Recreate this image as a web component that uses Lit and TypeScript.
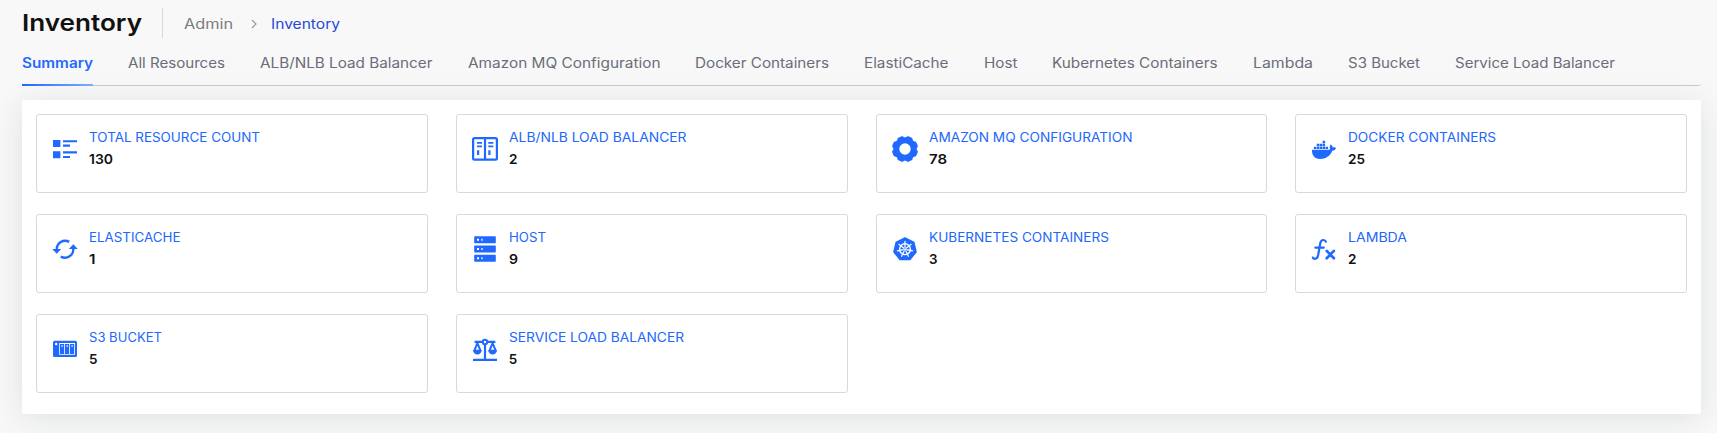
import { LitElement, html, css, svg } from "lit";
import { customElement, property } from "lit/decorators.js";

/** One line of text whose glyphs are stretched to a given advance width. */
@customElement("fit-text")
class FitText extends LitElement {
  @property() text = "";
  @property({ type: Number }) width = 0;

  static styles = css`
    :host { display: inline-block; white-space: pre; }
    .run { display: inline-block; transform-origin: 0 50%; }
  `;

  updated() {
    const run = this.renderRoot.querySelector(".run") as HTMLElement;
    run.style.transform = "none";
    const natural = run.getBoundingClientRect().width;
    this.style.width = `${this.width}px`;
    run.style.transform = `scaleX(${this.width / natural})`;
  }

  render() {
    return html`<span class="run">${this.text}</span>`;
  }
}

const polar = (cx: number, cy: number, r: number, deg: number) => {
  const a = ((deg - 90) * Math.PI) / 180;
  return [cx + r * Math.cos(a), cy + r * Math.sin(a)];
};

const gearPath = () => {
  const pts: string[] = [];
  for (let d = 0; d < 360; d += 2.5) {
    const wave = Math.tanh(-3.5 * Math.cos((d * 8 * Math.PI) / 180) + 1.8);
    const [x, y] = polar(13, 13, 12.4 + 0.7 * wave, d);
    pts.push(`${x.toFixed(2)} ${y.toFixed(2)}`);
  }
  return `M${pts.join("L")}Z M13 7.3a5.7 5.7 0 1 0 0 11.4a5.7 5.7 0 1 0 0-11.4Z`;
};

const heptagon = Array.from({ length: 7 }, (_, i) =>
  polar(13, 13.4, 11.4, (i * 360) / 7).map((n) => n.toFixed(2)).join(",")
).join(" ");

const icons: Record<string, unknown> = {
  list: svg`<path d="M1 4h7.4v7H1zM1 15.3h7.4v7H1zM11 4.2h14v2H11zM11 8.5h7v2.2h-7zM11 15.3h14v2.1H11zM11 20h7v2.1h-7z"/>`,
  alb: svg`
    <rect x="1.1" y="2.1" width="23.8" height="21.6" rx="1.4" fill="none" stroke="currentColor" stroke-width="2.2"/>
    <path d="M11.9 2h2.200v22h-2.200zM5 6h5v1.800H5zM5 9.600h5v1.700H5zM5 14.300h2.200v4.600H5zM16.300 6h5v1.800h-5zM16.300 9.600h5v1.700h-5zM16.300 14.300h2.200v4.600h-2.200z"/>`,
  gear: svg`<path fill-rule="evenodd" d=${gearPath()}/>`,
  docker: svg`<path transform="translate(1 3.5) scale(.0375 .0404)" d="M349.9 236.3h-66.1v-59.4h66.1v59.4zm0-204.3h-66.1v60.7h66.1V32zm78.2 144.8H362v59.4h66.1v-59.4zm-156.3-72.1h-66.1v60.1h66.1v-60.1zm78.1 0h-66.1v60.1h66.1v-60.1zm276.8 100c-14.4-9.7-47.6-13.2-73.1-8.4-3.3-24-16.7-44.9-41.1-63.7l-14-9.3-9.3 14c-18.4 27.8-23.4 73.6-3.7 103.8-8.7 4.7-25.8 11.1-48.4 10.7H2.4c-8.7 50.8 5.8 116.8 44 162.1 37.1 43.9 92.7 66.2 165.4 66.2 157.4 0 273.9-72.5 328.4-204.2 21.4.4 67.6.1 91.3-45.2 1.5-2.5 6.6-13.2 8.5-17.1l-13.3-8.9zm-511.1-27.9h-66v59.4h66.1v-59.4zm78.1 0h-66.1v59.4h66.1v-59.4zm78.1 0h-66.1v59.4h66.1v-59.4zm-78.1-72.1h-66.1v60.1h66.1v-60.1z"/>`,
  sync: svg`
    <path fill="none" stroke="currentColor" stroke-width="2.400" d="M4.800 13.400A8.300 8.300 0 0 1 17.200 5.900M21.200 12.400A8.300 8.300 0 0 1 8.800 20.600"/>
    <path d="M.200 12.900H9.200L4.700 17.800zM16.800 13h9L21.300 8.200z"/>`,
  host: svg`
    <path fill-rule="evenodd" d="M2.900.2h20.200q.7 0 .7.7v5.7q0 .7-.7.7H2.900q-.7 0-.7-.7V.9q0-.7.7-.7zM5 2.800v2h2v-2zM9.300 2.800v2h1.300v-2z"/>
    <path fill-rule="evenodd" d="M2.900 9.400h20.200q.7 0 .7.7v5.700q0 .7-.7.7H2.900q-.7 0-.7-.7v-5.700q0-.7.7-.7zM5 12v2h2v-2zM9.300 12v2h1.300v-2z"/>
    <path fill-rule="evenodd" d="M2.900 18.700h20.200q.7 0 .7.7v5.700q0 .7-.7.7H2.900q-.7 0-.7-.7v-5.700q0-.7.7-.7zM5 21.300v2h2v-2zM9.300 21.300v2h1.300v-2z"/>`,
  kube: svg`
    <polygon points=${heptagon} stroke="currentColor" stroke-width="1.4" stroke-linejoin="round"/>
    <g fill="none" stroke="#fff" stroke-width="1.2" stroke-linecap="round">
      <circle cx="13" cy="13.2" r="5.4" stroke-width="1.4"/>
      ${Array.from({ length: 7 }, (_, i) => {
        const [x1, y1] = polar(13, 13.2, 1.8, (i * 360) / 7);
        const [x2, y2] = polar(13, 13.2, 7.8, (i * 360) / 7);
        return svg`<line x1=${x1} y1=${y1} x2=${x2} y2=${y2}/>`;
      })}
    </g>
    <circle cx="13" cy="13.2" r="1" fill="#fff"/>`,
  fx: svg`
    <path fill="none" stroke="currentColor" stroke-width="2.200" stroke-linecap="round" d="M1.900 21.600c.300 1 1 1.200 1.900 1.200 2 0 2.900-1.100 3.300-3.400L9.300 7c.400-2 1.300-3 3-3 1.400 0 2.300.5 2.600 1.700M4.400 11.700h8.400"/>
    <path fill="none" stroke="currentColor" stroke-width="2.700" stroke-linecap="round" d="M15.700 14.900l7.200 7.300M22.900 14.900l-7.200 7.300"/>`,
  bucket: svg`
    <path fill-rule="evenodd" d="M2.700 4.700h20.600q1.700 0 1.700 1.700v13q0 1.700-1.700 1.700H2.700q-1.700 0-1.700-1.700v-13q0-1.700 1.700-1.700zM7.200 7v11.800h15.800v-11.800z"/>
    <path fill-rule="evenodd" d="M8 7.900h4.200v10H8zM13 7.900h4.200v10h-4.200zM18 7.900h4.200v10h-4.200zM9.600 9.100v2h1v-2zM14.600 9.100v2h1v-2zM19.600 9.100v2h1v-2z"/>
    <circle cx="4.200" cy="8" r="1.200" fill="#fff"/>`,
  scales: svg`
    <path d="M1 22.700h24v2.300H1zM11.900 6h2.200v17h-2.200zM2.600 4.800h20.800v2.200H2.600z"/>
    <circle cx="13" cy="6" r="2.200" fill="#fff" stroke="currentColor" stroke-width="2"/>
    <path fill="none" stroke="currentColor" stroke-width="2" stroke-linejoin="round" d="M5.400 7.200L2.200 14.800h6.400zM20.600 7.200l-3.200 7.600h6.400z"/>
    <path d="M1.200 14h8.400c0 3-1.800 4.400-4.200 4.400S1.200 17 1.200 14zM16.400 14h8.400c0 3-1.800 4.400-4.200 4.400s-4.200-1.400-4.200-4.400z"/>`,
};

interface Card { icon: string; label: string; width: number; value: string; valueWidth: number; }

@customElement("resource-card")
class ResourceCard extends LitElement {
  @property({ attribute: false }) card!: Card;

  static styles = css`
    :host {
      display: flex;
      box-sizing: border-box;
      gap: 11px;
      height: 79px;
      padding: 12px 15px;
      border: 1px solid #d9d9d9;
      border-radius: 3px;
      background: #fff;
    }
    .icon { flex: none; width: 26px; height: 26px; margin-top: 9px; color: #1f69ff; fill: currentColor; }
    .text { display: flex; flex-direction: column; padding-top: 1px; }
    .label { font-size: 12.6px; line-height: 20px; font-weight: 400; color: #2167fa; }
    .value { font-size: 13.5px; line-height: 22px; font-weight: 600; color: #111; }
  `;

  render() {
    const c = this.card;
    return html`
      <svg class="icon" viewBox="0 0 26 26">${icons[c.icon]}</svg>
      <div class="text">
        <fit-text class="label" .text=${c.label} .width=${c.width}></fit-text>
        <fit-text class="value" .text=${c.value} .width=${c.valueWidth}></fit-text>
      </div>`;
  }
}

const tabs: [string, number][] = [
  ["Summary", 71],
  ["All Resources", 97],
  ["ALB/NLB Load Balancer", 172.5],
  ["Amazon MQ Configuration", 192.5],
  ["Docker Containers", 134],
  ["ElastiCache", 84.5],
  ["Host", 33.5],
  ["Kubernetes Containers", 165.5],
  ["Lambda", 60],
  ["S3 Bucket", 72],
  ["Service Load Balancer", 160],
];

const cards: Card[] = [
  { icon: "list", label: "TOTAL RESOURCE COUNT", width: 171, value: "130", valueWidth: 24 },
  { icon: "alb", label: "ALB/NLB LOAD BALANCER", width: 177.5, value: "2", valueWidth: 8.5 },
  { icon: "gear", label: "AMAZON MQ CONFIGURATION", width: 203.5, value: "78", valueWidth: 18 },
  { icon: "docker", label: "DOCKER CONTAINERS", width: 148, value: "25", valueWidth: 17 },
  { icon: "sync", label: "ELASTICACHE", width: 91.5, value: "1", valueWidth: 6.5 },
  { icon: "host", label: "HOST", width: 37, value: "9", valueWidth: 9 },
  { icon: "kube", label: "KUBERNETES CONTAINERS", width: 180, value: "3", valueWidth: 8.5 },
  { icon: "fx", label: "LAMBDA", width: 59, value: "2", valueWidth: 8.5 },
  { icon: "bucket", label: "S3 BUCKET", width: 73, value: "5", valueWidth: 8.5 },
  { icon: "scales", label: "SERVICE LOAD BALANCER", width: 175, value: "5", valueWidth: 8.5 },
];

@customElement("app-root")
class AppRoot extends LitElement {
  static styles = css`
    :host {
      display: block;
      box-sizing: border-box;
      height: 433px;
      padding: 8px 16px 0 22px;
      overflow: hidden;
      background: #f8f8f8;
      font-family: Inter, "Open Sans", sans-serif;
    }
    .header { display: flex; align-items: center; height: 30px; }
    .title { font-size: 23.5px; line-height: 30px; font-weight: 600; color: #111; }
    .divider { width: 1px; height: 30px; margin: 0 21px 0 20px; background: #d3d9e0; }
    .crumb { padding-top: 2px; font-size: 13.8px; line-height: 20px; font-weight: 400; color: #7c7c7c; }
    .crumb.current { color: #2349d8; }
    .chevron { width: 6px; height: 10px; margin: 2px 13.5px 0 18px; fill: none; stroke: #999; stroke-width: 1.2; }
    .tabs {
      display: flex;
      gap: 35px;
      box-sizing: border-box;
      height: 48px;
      border-bottom: 1px solid #c9cacb;
      border-radius: 3px;
    }
    .tab {
      box-sizing: border-box;
      height: 48px;
      padding-top: 15px;
      font-size: 13.8px;
      line-height: 20px;
      font-weight: 400;
      color: #6c6c7a;
    }
    .tab.active {
      font-weight: 600;
      color: #1f69ff;
      background: linear-gradient(90deg, #1f69ff, #80acff) left bottom / 100% 2px no-repeat;
    }
    .panel {
      box-sizing: border-box;
      height: 314px;
      margin-top: 14px;
      margin-right: 0;
      padding: 14px;
      border-radius: 3px;
      background: #fff;
      box-shadow: 0 4px 30px rgba(20, 45, 35, 0.11);
    }
    .grid { display: grid; grid-template-columns: repeat(4, 1fr); gap: 21px 28px; }
  `;

  render() {
    return html`
      <div class="header">
        <fit-text class="title" .text=${"Inventory"} .width=${120}></fit-text>
        <div class="divider"></div>
        <fit-text class="crumb" .text=${"Admin"} .width=${49}></fit-text>
        <svg class="chevron" viewBox="0 0 6 10"><path d="M1 1l4 4-4 4"/></svg>
        <fit-text class="crumb current" .text=${"Inventory"} .width=${69}></fit-text>
      </div>
      <nav class="tabs">
        ${tabs.map(([name, width], i) => html`
          <div class=${i === 0 ? "tab active" : "tab"}>
            <fit-text .text=${name} .width=${width}></fit-text>
          </div>`)}
      </nav>
      <main class="panel">
        <div class="grid">
          ${cards.map((card) => html`<resource-card .card=${card}></resource-card>`)}
        </div>
      </main>`;
  }
}
